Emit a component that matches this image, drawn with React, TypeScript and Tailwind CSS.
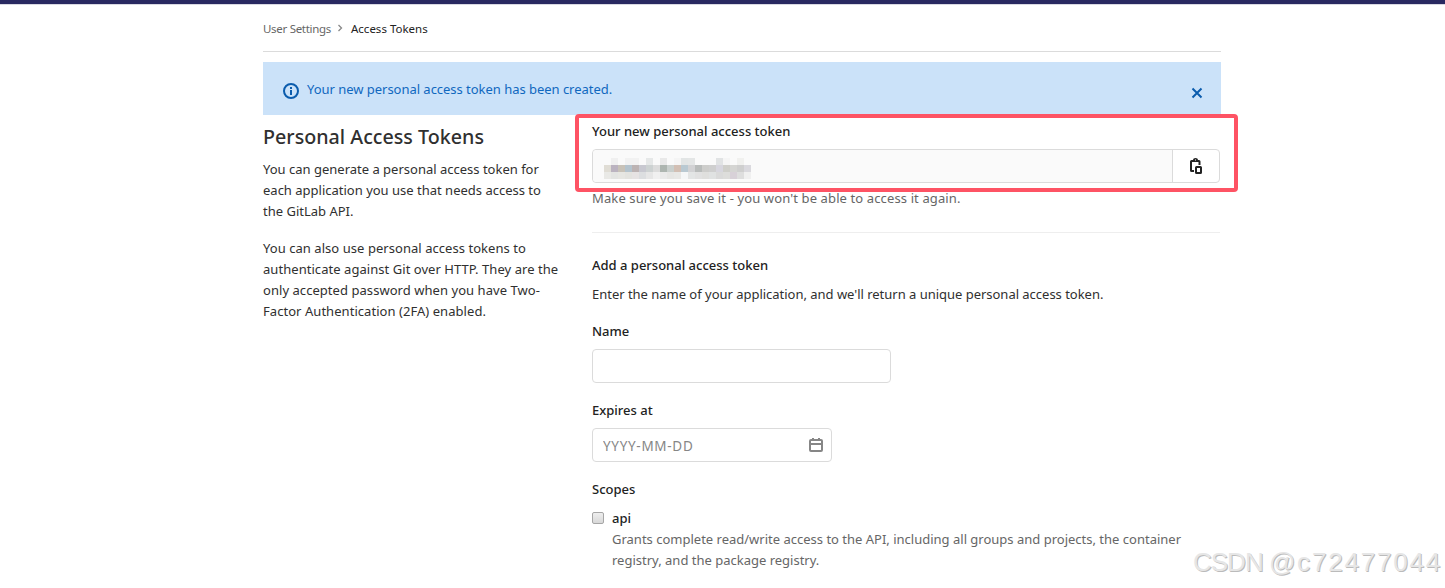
import { useState } from "react";

const mosaic = [
  ["#fafafa", "#f0f0f0", "#fafafa", "#f2f2f2", "#f2f2f2", "#fafafa", "#e6e8e8", "#fafafa", "#e9e9e9", "#fafafa", "#f5f5f5", "#e2e5e5", "#e4e6e6", "#fafafa", "#fafafa", "#fafafa", "#e1e3e4", "#f5f5f5", "#fafafa", "#f1f1ef", "#fafafa"],
  ["#e0ddd5", "#bbb3c0", "#c8c2b8", "#b4c3cd", "#bcb3b3", "#c8c8d0", "#cdd2d2", "#dcdcdc", "#adb5b0", "#c9cfcd", "#d2bfb4", "#b9c9d2", "#d2d2d4", "#b9bcbb", "#cdcdcb", "#cfcfcf", "#d7d6de", "#cfcfca", "#d5d5d3", "#cfcfcf", "#dad9de"],
  ["#e9e9e6", "#e3e4e2", "#e6e6e2", "#e3e3df", "#e6e3e3", "#dcdee0", "#e6e6e6", "#f0f0f0", "#eaeaea", "#e6e6e4", "#e8e8e6", "#f5f7f8", "#e3e5e5", "#e1e1e1", "#dfdfdd", "#e0e2e2", "#dadada", "#dddddb", "#d8d1d8", "#dedede", "#f0f0f0"],
];

function FieldLabel({ children }: { children: string }) {
  return <label className="block leading-[21px] font-medium text-[#222]">{children}</label>;
}

function App() {
  const [showAlert, setShowAlert] = useState(true);

  return (
    <div className="relative h-[588px] overflow-hidden bg-white font-['Noto_Sans',sans-serif] text-[13px] text-[#303030]">
      <div className="h-[5px] border-b border-[#d9d9e2] bg-[#292961]" />

      <div className="ml-[263px] w-[958px]">
        {/* Breadcrumb */}
        <nav className="flex h-[47px] items-center border-b border-[#dbdbdb] pt-0.5 text-[11.5px]">
          <span className="tracking-[-0.3px] text-[#666]">User Settings</span>
          <svg className="mr-1.5 mb-0.5 ml-1 size-2.5" viewBox="0 0 10 10" fill="none" stroke="#888" strokeWidth="1.3">
            <path d="M3.500 2l3 3-3 3" />
          </svg>
          <span className="text-[#222]">Access Tokens</span>
        </nav>

        {/* Alert */}
        {showAlert && (
          <div className="mt-2.5 flex h-[53px] items-center bg-[#cbe2f9] pr-[18px] pl-5 text-[#1068bf]">
            <svg className="mt-1 size-4" viewBox="0 0 16 16" fill="none" stroke="#0b5cad" strokeWidth="2">
              <circle cx="8" cy="8" r="7" />
              <path d="M8 7v5M8 4v2" />
            </svg>
            <span className="mt-0.5 ml-2 flex-1 tracking-[-0.03px]">Your new personal access token has been created.</span>
            <button onClick={() => setShowAlert(false)} className="mt-2">
              <svg className="size-3" viewBox="0 0 12 12" fill="none" stroke="#0b5cad" strokeWidth="2">
                <path d="M1.500 1.500l9 9M10.500 1.500l-9 9" />
              </svg>
            </button>
          </div>
        )}

        <div className="flex">
          {/* Description */}
          <div className="w-[329px] shrink-0 pt-2 leading-[21px]">
            <h4 className="text-[19.7px] leading-7 font-medium">Personal Access Tokens</h4>
            <p className="mt-2">
              You can generate a personal access token for
              <br />
              each application you use that needs access to
              <br />
              the GitLab API.
            </p>
            <p className="mt-4 tracking-[0.05px]">
              You can also use personal access tokens to
              <br />
              authenticate against Git over HTTP. They are the
              <br />
              only accepted password when you have Two-
              <br />
              Factor Authentication (2FA) enabled.
            </p>
          </div>

          {/* Form */}
          <div className="w-[628px] pt-1.5">
            <FieldLabel>Your new personal access token</FieldLabel>
            <div className="mt-[7px] flex h-[34px] rounded border border-[#dbdbdb]">
              <div className="flex-1 rounded-l bg-[#fafafa] pt-2 pl-[11px]">
                {mosaic.map((row, y) => (
                  <div key={y} className="flex">
                    {row.map((color, x) => (
                      <span key={x} className="h-[7px] w-[7px]" style={{ backgroundColor: color }} />
                    ))}
                  </div>
                ))}
              </div>
              <button className="flex w-[47px] items-center justify-center border-l border-[#dbdbdb]">
                <svg className="size-4" viewBox="0 0 16 16" fill="none" stroke="#222" strokeWidth="2">
                  <path d="M6 13H3.500a.5.5 0 0 1-.5-.5V3.500a.5.5 0 0 1 .5-.5H11a.5.5 0 0 1 .5.5V7" />
                  <path d="M5 4V2.300C5 .8 6 0 7.500 0S10 .8 10 2.300V4z" fill="#222" stroke="none" />
                  <rect x="7" y="1.500" width="1" height="1" fill="#fff" stroke="none" />
                  <rect x="8" y="9" width="5" height="6" rx=".5" />
                </svg>
              </button>
            </div>
            <p className="mt-[5px] leading-[21px] tracking-[0.12px] text-[#666]">
              Make sure you save it - you won't be able to access it again.
            </p>
            <hr className="mt-[23px] border-[#eee]" />

            <h5 className="mt-[22px] leading-[21px] font-medium text-[#222]">Add a personal access token</h5>
            <p className="mt-2 leading-[21px] tracking-[-0.02px]">
              Enter the name of your application, and we'll return a unique personal access token.
            </p>

            <div className="mt-4">
              <FieldLabel>Name</FieldLabel>
              <input className="mt-[7px] block h-[34px] w-[299px] rounded border border-[#dbdbdb] px-2.5" />
            </div>
            <div className="mt-[17px]">
              <FieldLabel>Expires at</FieldLabel>
              <div className="mt-[7px] flex h-[34px] w-60 items-center justify-between rounded border border-[#dbdbdb] pr-[7px] pl-2.5">
                <input
                  placeholder="YYYY-MM-DD"
                  className="mt-0.5 w-40 text-[13.5px] tracking-[0.7px] outline-none placeholder:text-[#868686]"
                />
                <svg className="size-4" viewBox="0 0 16 16" fill="none" stroke="#868686" strokeWidth="2">
                  <rect x="2" y="3" width="12" height="11" rx="1" />
                  <path d="M2 7h12" />
                  <path d="M5 1v3M11 1v3" />
                </svg>
              </div>
            </div>

            <div className="mt-[17px]">
              <FieldLabel>Scopes</FieldLabel>
              <div className="mt-2 flex">
                <span className="mt-1 mr-2 size-3 rounded-[2px] border border-[#a6a6a6] bg-linear-to-b from-[#eee] to-[#d8d8d8]" />
                <div className="leading-[21px]">
                  <div className="font-medium text-[#222]">api</div>
                  <p className="text-[#666]">
                    Grants complete read/write access to the API, including all groups and projects, the container
                    <br />
                    registry, and the package registry.
                  </p>
                </div>
              </div>
            </div>
          </div>
        </div>
      </div>

      {/* Highlight frame */}
      <div className="pointer-events-none absolute top-[114px] left-[575px] h-[78px] w-[663px] rounded-[4px] border-4 border-[#fe5364]" />

      <div className="absolute top-[546px] left-[1193px] font-['Liberation_Sans',sans-serif] text-[26px] leading-8 whitespace-nowrap text-[#e6e6e6] [text-shadow:1px_1px_0_#bbb]">
        <span className="tracking-[-1px]">CSDN </span>
        <span className="tracking-[1.8px]">@c72477044</span>
      </div>
    </div>
  );
}

export default App;
